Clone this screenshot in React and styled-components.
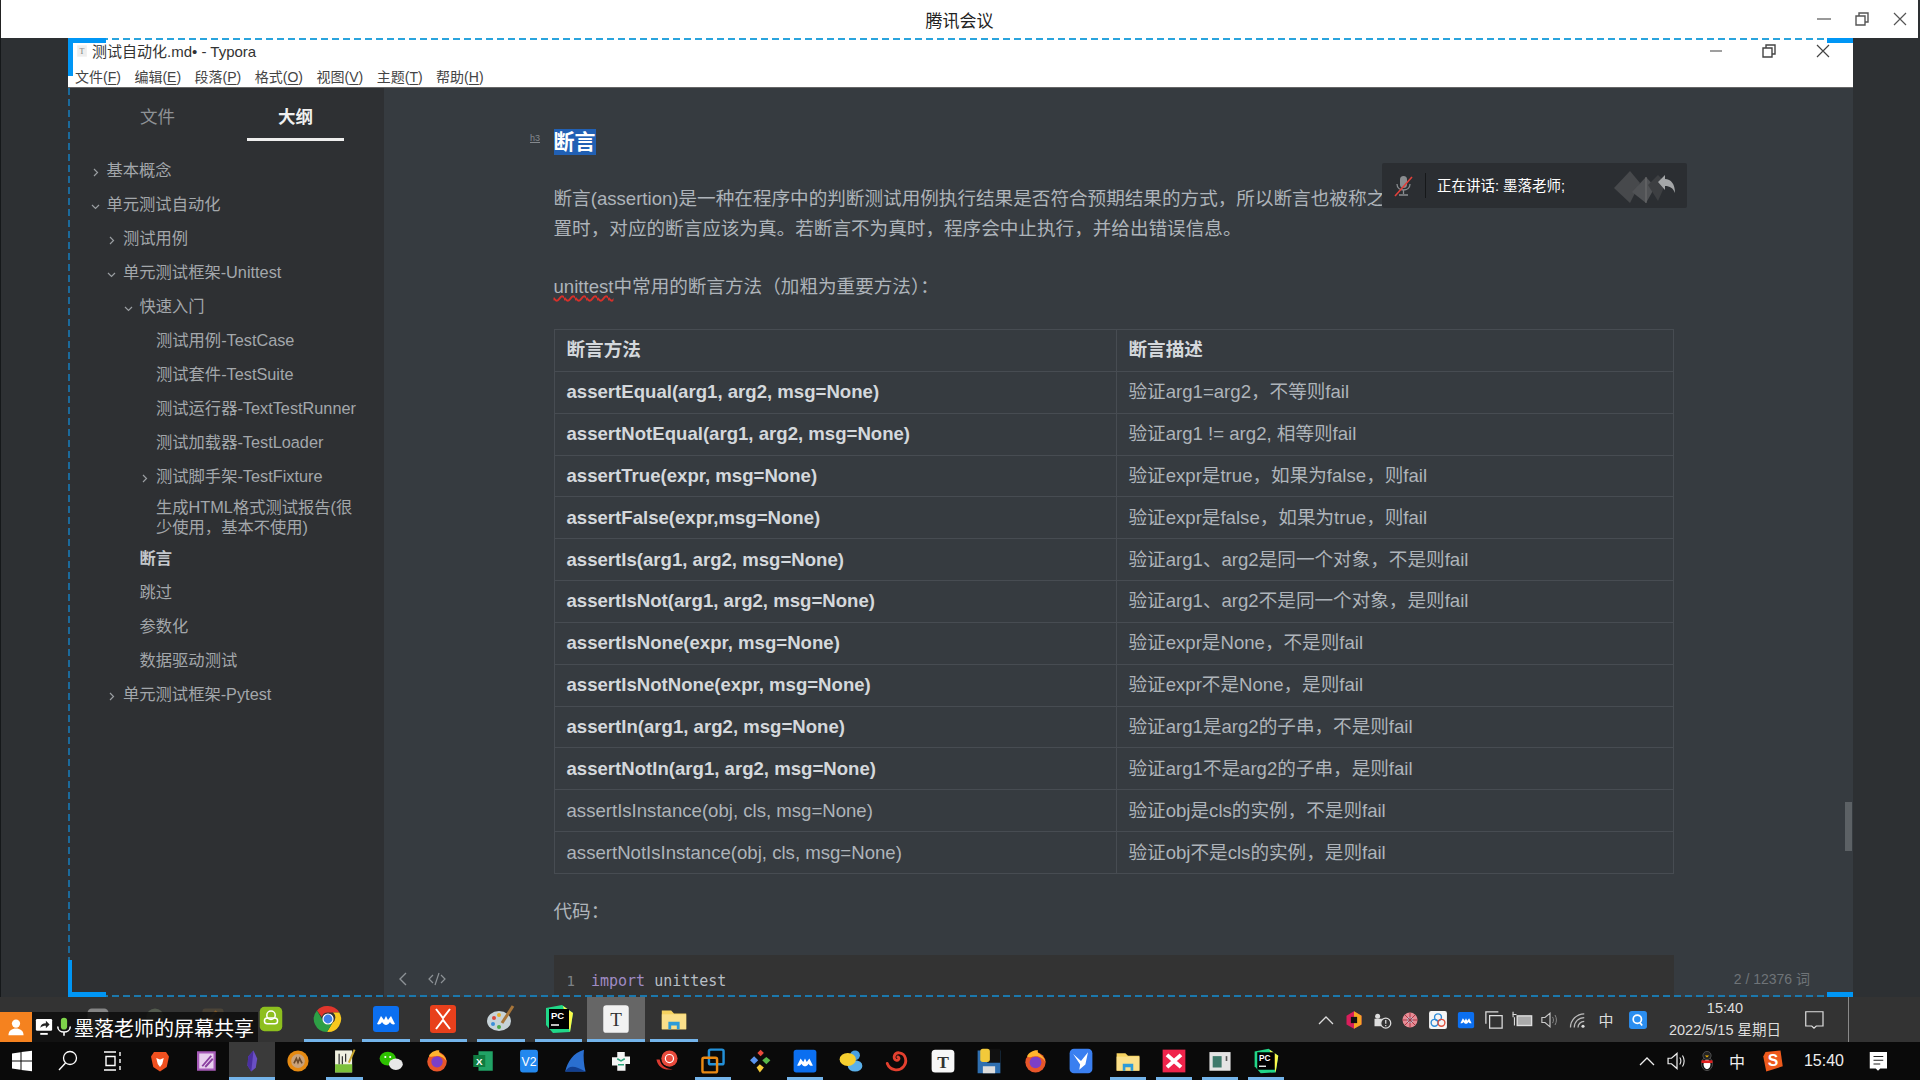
import React from 'react';
import styled, { createGlobalStyle } from 'styled-components';

const GlobalStyle = createGlobalStyle`
  html, body { margin: 0; padding: 0; height: 100%; background: #2d3033; overflow: hidden; }
  body { font-family: "Liberation Sans", "Noto Sans CJK SC", sans-serif; }
  * { box-sizing: border-box; }
`;

const Page = styled.div`
  width: 1920px;
  height: 1080px;
  display: flex;
  flex-direction: column;
  overflow: hidden;
  position: relative;
`;

/* meeting title bar */
const TopBar = styled.div`
  height: 38px;
  flex: none;
  background: #fff;
  border-left: 1px solid #222;
  border-right: 2px solid #2d3033;
  display: flex;
  align-items: center;
  justify-content: center;
  font-size: 17px;
  color: #222;
  position: relative;
`;

const WinButtons = styled.div`
  position: absolute;
  right: ${({ $right }) => $right}px;
  top: ${({ $top }) => $top}px;
  display: flex;
  gap: ${({ $gap }) => $gap}px;
  color: ${({ $color }) => $color};
`;

const Middle = styled.div`
  height: 959px;
  flex: none;
  display: flex;
  background: #2d3033;
  border-left: 1px solid #15181a;
`;

const Gutter = styled.div`
  flex: none;
  width: ${({ $w }) => $w}px;
`;

const Typora = styled.div`
  width: 1785px;
  flex: none;
  position: relative;
  display: flex;
  flex-direction: column;
  overflow: hidden;
`;

const DashTop = styled.div`
  height: 2px;
  flex: none;
  background: repeating-linear-gradient(90deg, #2aa4dd 0 7px, transparent 7px 11px), #fff;
`;

const DashBottom = styled.div`
  position: absolute;
  left: 0;
  right: 0;
  bottom: 0;
  height: 2px;
  background: repeating-linear-gradient(90deg, #1b78ad 0 7px, transparent 7px 11px);
`;

const DashLeft = styled.div`
  position: absolute;
  left: 0;
  top: 50px;
  bottom: 0;
  width: 2px;
  background: repeating-linear-gradient(180deg, #1b6a9b 0 7px, transparent 7px 11px);
`;

const Corner = styled.div`
  position: absolute;
  background: #0096f5;
  width: ${({ $w }) => $w}px;
  height: ${({ $h }) => $h}px;
  ${({ $left }) => $left !== undefined && `left: ${$left}px;`}
  ${({ $right }) => $right !== undefined && `right: ${$right}px;`}
  ${({ $top }) => $top !== undefined && `top: ${$top}px;`}
  ${({ $bottom }) => $bottom !== undefined && `bottom: ${$bottom}px;`}
`;

const Head = styled.div`
  height: 48px;
  flex: none;
  background: #fff;
  border-bottom: 1px solid #666;
  color: #333;
  position: relative;
`;

const TitleRow = styled.div`
  height: 21px;
  display: flex;
  align-items: center;
  padding-left: 7px;
  font-size: 15px;
  gap: 3px;
`;

const MenuRow = styled.div`
  height: 24px;
  margin-top: 3px;
  display: flex;
  align-items: center;
  padding-left: 7px;
  gap: 13.5px;
  font-size: 14px;
  color: #444;
  u { text-underline-offset: 2px; }
`;

const Body = styled.div`
  flex: 1;
  display: flex;
  min-height: 0;
`;

const Sidebar = styled.div`
  width: 316px;
  flex: none;
  background: #2e3033;
`;

const Tabs = styled.div`
  height: 53px;
  display: flex;
  padding-left: 41px;
  gap: 41px;
`;

const Tab = styled.div`
  width: 97px;
  height: 53px;
  display: flex;
  align-items: flex-start;
  justify-content: center;
  padding-top: 18px;
  font-size: 17.5px;
  line-height: 22px;
  color: ${({ $on }) => ($on ? '#f0f0f0' : '#8e9296')};
  font-weight: ${({ $on }) => ($on ? 700 : 400)};
  border-bottom: 3px solid ${({ $on }) => ($on ? '#eeeeee' : 'transparent')};
`;

const Outline = styled.div`
  margin-top: 12px;
`;

const OutlineItem = styled.div`
  min-height: 34px;
  display: flex;
  align-items: center;
  padding: 4px 26px 4px ${({ $level }) => 20.5 + $level * 16.5}px;
  font-size: 16.3px;
  line-height: 20px;
  color: ${({ $on }) => ($on ? '#c4c8cc' : '#a3a7ab')};
  font-weight: ${({ $on }) => ($on ? 700 : 400)};
`;

const Arrow = styled.span`
  width: 18px;
  flex: none;
  display: flex;
  padding: 5px 0 0 2px;
  color: #9a9ea2;
`;

const Main = styled.div`
  flex: 1;
  background: #363b40;
  position: relative;
  overflow: hidden;
  padding: 41px 0 0 169.5px;
  color: #aeb4ba;
  font-size: 18.6px;
  line-height: 30px;
`;

const Article = styled.div`
  width: 1120px;
`;

const HeadingRow = styled.div`
  height: 26px;
  line-height: 26px;
`;

const HeadingMark = styled.span`
  position: absolute;
  left: 146px;
  top: 44px;
  font-size: 9px;
  line-height: 12px;
  color: #85898e;
  text-decoration: underline;
`;

const Heading = styled.span`
  display: inline-block;
  font-size: 21px;
  font-weight: 700;
  color: #fff;
  background: #2160b4;
`;

const Para = styled.p`
  margin: ${({ $gap }) => $gap}px 0 0;
`;

const Wavy = styled.span`
  text-decoration: underline wavy #d8302a 1.5px;
  text-underline-offset: 2px;
`;

const Table = styled.table`
  margin-top: 27px;
  width: 1120px;
  table-layout: fixed;
  border-collapse: collapse;
  td, th {
    height: 41.85px;
    padding: 0 0 0 12px;
    border: 1px solid #474c52;
    text-align: left;
    font-size: 18.6px;
    line-height: 22px;
  }
  th { color: #d4d8dc; font-weight: 700; }
`;

const MethodCell = styled.td`
  color: ${({ $bold }) => ($bold ? '#d4d8dc' : '#aeb4ba')};
  font-weight: ${({ $bold }) => ($bold ? 700 : 400)};
`;

const CodeLabel = styled.p`
  margin: 23px 0 0;
`;

const CodeBlock = styled.div`
  margin-top: 28px;
  height: 60px;
  background: #333333;
  padding: 11px 0 0 13px;
  display: flex;
  gap: 16px;
  font-family: "DejaVu Sans Mono", monospace;
  font-size: 15px;
  line-height: 30px;
  color: #b8bfc6;
`;

const LineNo = styled.span`
  color: #7d8287;
  font-size: 14px;
`;

const Keyword = styled.span`
  color: #a08bc4;
`;

const FooterBar = styled.div`
  position: absolute;
  left: 14px;
  right: 43px;
  bottom: 8px;
  height: 20px;
  display: flex;
  align-items: center;
  gap: 20px;
  color: #8d9296;
`;

const WordCount = styled.span`
  margin-left: auto;
  font-size: 14px;
  color: #6f7478;
`;

const Scrollbar = styled.div`
  position: absolute;
  right: 1px;
  top: 714px;
  width: 7px;
  height: 49px;
  background: #5c6165;
`;

const Toast = styled.div`
  position: absolute;
  left: 998px;
  top: 75px;
  width: 305px;
  height: 45px;
  background: #2b2e32;
  border-radius: 2px;
  display: flex;
  align-items: center;
  padding-left: 10px;
  color: #fff;
  font-size: 14.5px;
`;

const ToastSep = styled.div`
  width: 1px;
  height: 25px;
  background: #16181a;
  margin: 0 11px 0 11px;
`;

const ToastMark = styled.div`
  margin-left: auto;
  margin-right: 11px;
  padding-top: 2px;
  display: flex;
`;

/* tencent meeting's shared windows taskbar */
const ShareBar = styled.div`
  height: 45px;
  flex: none;
  background: #333333;
  display: flex;
  padding-left: 69px;
  position: relative;
`;

const BarCell = styled.div`
  width: 57.6px;
  height: 45px;
  flex: none;
  display: flex;
  align-items: center;
  justify-content: center;
  padding-bottom: 2px;
  background: ${({ $active }) => ($active ? '#666' : 'transparent')};
  position: relative;
  &::after {
    content: "";
    display: ${({ $on }) => ($on ? 'block' : 'none')};
    position: absolute;
    left: ${({ $active }) => ($active ? 0 : 5)}px;
    right: ${({ $active }) => ($active ? 0 : 5)}px;
    bottom: 0;
    height: 3px;
    background: #74b4ea;
  }
  & > svg { opacity: ${({ $dim }) => ($dim ? 0.45 : 1)}; }
`;

const ShareTray = styled.div`
  margin-left: auto;
  margin-right: 71px;
  display: flex;
  align-items: center;
  color: #dcdcdc;
  border-right: 1px solid #8a8a8a;
`;

const ShareTrayCell = styled.div`
  width: ${({ $w }) => $w || 28}px;
  height: 45px;
  flex: none;
  display: flex;
  align-items: center;
  justify-content: center;
  padding-right: ${({ $pr }) => $pr || 0}px;
  font-size: 15px;
`;

const Clock = styled.div`
  width: 130px;
  flex: none;
  margin-left: 4px;
  padding-bottom: 2px;
  display: flex;
  flex-direction: column;
  align-items: center;
  font-size: 14.5px;
  line-height: 22px;
  color: #dedede;
`;

const ShareBadge = styled.div`
  position: absolute;
  left: 0;
  bottom: 0;
  width: 258px;
  height: 30px;
  background: rgba(14, 14, 14, 0.88);
  display: flex;
  align-items: center;
  color: #fff;
  font-size: 20px;
`;

const BadgeUser = styled.div`
  width: 32px;
  height: 30px;
  flex: none;
  background: #f5821f;
  display: flex;
  align-items: center;
  justify-content: center;
  margin-right: 2px;
`;

const Taskbar = styled.div`
  height: 38px;
  flex: none;
  background: #0a0a0a;
  display: flex;
`;

const TaskCell = styled.div`
  width: 46.07px;
  height: 38px;
  flex: none;
  display: flex;
  align-items: center;
  justify-content: center;
  background: ${({ $active }) => ($active ? '#3a3a3a' : 'transparent')};
  position: relative;
  &:first-child { margin-left: -1px; }
  &::after {
    content: "";
    display: ${({ $on }) => ($on ? 'block' : 'none')};
    position: absolute;
    left: ${({ $active }) => ($active ? 0 : 5)}px;
    right: ${({ $active }) => ($active ? 0 : 5)}px;
    bottom: 0;
    height: 3px;
    background: #74b4ea;
  }
`;

const SysTray = styled.div`
  margin-left: auto;
  display: flex;
  align-items: center;
  padding-right: 18px;
  color: #eee;
`;

const SysCell = styled.div`
  width: ${({ $w }) => $w}px;
  height: 38px;
  flex: none;
  display: flex;
  align-items: center;
  justify-content: center;
  font-size: 16px;
`;

const Ico = ({ s = 28, children, v = '0 0 32 32' }) => (
  <svg width={s} height={s} viewBox={v} fill="none">{children}</svg>
);

const Chev = ({ open }) => (
  <svg width="9" height="9" viewBox="0 0 9 9" fill="none" stroke="currentColor" strokeWidth="1.2">
    <path d={open ? 'M1 3l3.5 3.5L8 3' : 'M3 1l3.5 3.5L3 8'} />
  </svg>
);

const Minimize = ({ w }) => <svg width={w} height="14" viewBox="0 0 14 14" stroke="currentColor" strokeWidth="1.2"><path d="M0 7h14" /></svg>;
const Restore = () => (
  <svg width="14" height="14" viewBox="0 0 14 14" fill="none" stroke="currentColor" strokeWidth="1.4">
    <path d="M1 4h9v9H1zM4 4V1h9v9h-3" />
  </svg>
);
const Close = () => <svg width="14" height="14" viewBox="0 0 14 14" stroke="currentColor" strokeWidth="1.2"><path d="M1 1l12 12M13 1L1 13" /></svg>;

const TyporaIcon = ({ s = 28 }) => (
  <Ico s={s}>
    <rect x="3" y="3" width="26" height="26" rx="4" fill="#f7f7f7" />
    <text x="16" y="24" textAnchor="middle" fontSize="20" fontWeight="700" fontFamily="Liberation Serif, serif" fill="#333">T</text>
  </Ico>
);

const Mountain = ({ s = 28 }) => (
  <Ico s={s}>
    <rect x="3" y="3" width="26" height="26" rx="3" fill="#0b6ff0" />
    <path d="M7 21l4-8 3 4 2-4 2 4 3-4 4 8c-2 1-4 0-5-2-1 2-3 3-4 3s-3-1-4-3c-1 2-3 3-5 2z" fill="#fff" />
  </Ico>
);

const Folder = ({ s = 28 }) => (
  <Ico s={s}>
    <path d="M3 7h10l3 3h13v17H3z" fill="#f6d25f" />
    <path d="M3 11h26v16H3z" fill="#fbe08a" />
    <path d="M10 27v-8h12v8h-3v-4h-6v4z" fill="#2d9bd8" />
  </Ico>
);

const PyCharm = ({ s = 28 }) => (
  <Ico s={s}>
    <path d="M3 5l16-3 11 8-3 19-17 1-7-8z" fill="#21d789" />
    <path d="M20 3l10 7-3 19z" fill="#fcf84a" />
    <rect x="6" y="6" width="20" height="20" fill="#000" />
    <text x="8" y="16" fontSize="9.5" fontWeight="700" fontFamily="Liberation Sans, sans-serif" fill="#fff">PC</text>
    <path d="M8 22h8" stroke="#fff" strokeWidth="1.5" />
  </Ico>
);

const Firefox = ({ s = 26 }) => (
  <Ico s={s}>
    <circle cx="16" cy="17" r="12" fill="#e8562a" />
    <circle cx="16" cy="17" r="7" fill="#7b3fc8" />
    <path d="M6 10c2-5 9-8 13-7-1 2 0 3 3 5 3 2 5 5 6 9-3-5-7-8-14-7-3 0-6 2-8 0z" fill="#ffb52e" />
  </Ico>
);

const Bubbles = () => (
  <Ico s={26}>
    <circle cx="21" cy="9" r="6" fill="#4a9fe0" />
    <ellipse cx="21" cy="22" rx="9" ry="7" fill="#5bb0ea" />
    <ellipse cx="12" cy="14" rx="10" ry="8" fill="#f6cf2f" />
  </Ico>
);

const barIcons = [
  <Ico key="a"><rect x="4" y="4" width="24" height="24" rx="5" fill="#e8e8e8" /></Ico>,
  <Ico key="b"><circle cx="16" cy="14" r="10" fill="#7a8a70" /><rect x="8" y="18" width="16" height="10" fill="#444" /></Ico>,
  <Ico key="c"><rect x="4" y="4" width="24" height="24" rx="3" fill="#6a5a40" /><path d="M20 7l-8 9h8l-8 9" stroke="#e08a20" strokeWidth="3" /></Ico>,
  <Ico key="d" s={30}>
    <rect x="4" y="3" width="24" height="26" rx="5" fill="#8dbf1e" />
    <circle cx="16" cy="12" r="4.5" stroke="#fff" strokeWidth="1.6" />
    <rect x="9" y="15" width="14" height="6" rx="3" stroke="#fff" strokeWidth="1.6" />
  </Ico>,
  <Ico key="e" s={32}>
    <path d="M16 3a13 13 0 0 1 11.3 6.5H16a6.5 6.5 0 0 0-6.2 4.4L5 7.5A13 13 0 0 1 16 3z" fill="#e0362c" />
    <path d="M27.3 9.5A13 13 0 0 1 15 29l5.6-9.2A6.5 6.5 0 0 0 21 9.5z" fill="#f8c81e" />
    <path d="M5 7.5l5.7 9.8a6.5 6.5 0 0 0 9.6 2.7L15 29A13 13 0 0 1 5 7.5z" fill="#2d9f45" />
    <circle cx="16" cy="16" r="5" fill="#3f7fe8" stroke="#fff" strokeWidth="1.2" />
  </Ico>,
  <Mountain key="f" s={32} />,
  <Ico key="g" s={32}>
    <rect x="3" y="2" width="26" height="28" rx="3" fill="#e8401c" />
    <path d="M9 6l7 9 7-9M9 26l7-9 7 9" stroke="#fff" strokeWidth="2" />
  </Ico>,
  <Ico key="h" s={32}>
    <ellipse cx="14" cy="18" rx="12" ry="10" fill="#c7d3d8" />
    <circle cx="9" cy="15" r="2" fill="#d9483b" /><circle cx="14" cy="12" r="2" fill="#e6b02e" />
    <circle cx="8" cy="21" r="2" fill="#3a8fd8" /><circle cx="14" cy="24" r="2" fill="#4aa84a" />
    <path d="M17 20L28 3" stroke="#a8763a" strokeWidth="3" />
  </Ico>,
  <PyCharm key="i" s={32} />,
  <Ico key="j" s={34}>
    <rect x="4" y="3" width="24" height="26" rx="3" fill="#f2f2f2" />
    <text x="16" y="23" textAnchor="middle" fontSize="18" fontFamily="Liberation Serif, serif" fill="#333">T</text>
  </Ico>,
  <Folder key="k" s={30} />,
];

const taskIcons = [
  <Ico key="win" s={22} v="0 0 22 22"><path d="M1 3.5l8.5-1.2v8.2H1zM10.5 2.1L21 .7v9.8H10.5zM1 11.5h8.5v8.2L1 18.5zM10.5 11.5H21v9.8l-10.5-1.4z" fill="#fff" /></Ico>,
  <Ico key="search" s={22} v="0 0 22 22"><circle cx="13" cy="8" r="6.5" stroke="#fff" strokeWidth="1.3" /><path d="M8.5 13L2 20" stroke="#fff" strokeWidth="1.4" /></Ico>,
  <Ico key="view" s={22} v="0 0 22 22"><path d="M1 2h12M1 20h12M3 6.5h9v9H3zM17 2v4M17 9v4M17 16v4" stroke="#fff" strokeWidth="1.4" /></Ico>,
  <Ico key="brave" s={24}><path d="M8 4h16l4 6-3 14-9 6-9-6-3-14z" fill="#f0501f" /><path d="M11 12l5 2 5-2-2 8-3 4-3-4z" fill="#fff" /></Ico>,
  <Ico key="note" s={24}><rect x="4" y="3" width="25" height="26" fill="#a65bb8" /><rect x="7" y="6" width="19" height="20" fill="#e8d0ee" /><path d="M11 23L23 9M15 24L25 13" stroke="#8a3fa0" strokeWidth="2.5" /></Ico>,
  <Ico key="obs" s={24}><path d="M18 2l5 11-2 12-6 5-5-8 1-12z" fill="#6a4fc4" /><path d="M18 2l-7 8-1 12 5 8z" fill="#4a2fa0" /></Ico>,
  <Ico key="audio" s={26}><circle cx="16" cy="16" r="13" fill="#e58a12" /><circle cx="16" cy="16" r="8.5" fill="#c9a27a" /><path d="M11 19l3-6 2 5 2-5 3 6" stroke="#6b4a2a" strokeWidth="2" /></Ico>,
  <Ico key="pad" s={26}><rect x="5" y="3" width="21" height="27" fill="#f0f0e0" /><rect x="5" y="20" width="21" height="10" fill="#7cc13a" /><path d="M10 7v13M14 10v10M18 7v10" stroke="#333" strokeWidth="1.5" /><path d="M29 2l-7 16" stroke="#c9a62e" strokeWidth="2.5" /></Ico>,
  <Ico key="wechat" s={26}><ellipse cx="12" cy="13" rx="10" ry="8.5" fill="#2dc100" /><ellipse cx="22" cy="20" rx="8.5" ry="7" fill="#e8e8e8" /><circle cx="9" cy="11" r="1.3" fill="#fff" /><circle cx="15" cy="11" r="1.3" fill="#fff" /></Ico>,
  <Firefox key="ff" />,
  <Ico key="xl" s={24}><rect x="10" y="3" width="19" height="26" fill="#21a366" /><rect x="3" y="8" width="16" height="16" fill="#107c41" /><text x="11" y="21" textAnchor="middle" fontSize="13" fontWeight="700" fontFamily="Liberation Sans, sans-serif" fill="#fff">X</text></Ico>,
  <Ico key="v2" s={26}><rect x="5" y="2" width="22" height="28" rx="3" fill="#2388ee" /><text x="16" y="22" textAnchor="middle" fontSize="15" fontFamily="Liberation Sans, sans-serif" fill="#fff">V2</text></Ico>,
  <Ico key="fin" s={26}><path d="M4 29C7 16 14 6 27 2c-1 9 0 19 2 27z" fill="#2a6fd0" /><path d="M4 29C8 22 14 20 29 29z" fill="#123f90" /></Ico>,
  <Ico key="puzzle" s={24}><path d="M11 4h10v6h7v10h-6v9H11v-7H4V11h7z" fill="#f4f4f4" /><path d="M11 13l5 3 5-3M12 21h8" stroke="#2aa57a" strokeWidth="2" /></Ico>,
  <Ico key="snail" s={26}><circle cx="19" cy="13" r="10" fill="#e84a3c" /><circle cx="19" cy="13" r="5" stroke="#fff" strokeWidth="1.5" /><path d="M3 14c2 10 10 14 20 12-8-1-14-3-16-12z" fill="#d93a30" /></Ico>,
  <Ico key="box" s={26}><rect x="11" y="2" width="18" height="18" rx="2" stroke="#2390d8" strokeWidth="3" /><rect x="3" y="12" width="18" height="18" rx="2" stroke="#ea8a14" strokeWidth="3" /></Ico>,
  <Ico key="git" s={26}><path d="M5 15l5-5 5 5-5 5z" fill="#5a94ee" /><path d="M14 6l4-4 4 4-4 4z" fill="#e84a3c" /><path d="M20 15l5-4 5 4-5 5z" fill="#59b84a" /><path d="M13 24l4-4 5 4-5 6z" fill="#f3c93a" /></Ico>,
  <Mountain key="m" />,
  <Bubbles key="bub" />,
  <Ico key="spiral" s={26}><path d="M4 19c3 8 14 11 20 4 5-6 3-16-5-17-6-1-9 7-4 9 3 1 5-3 2-4" stroke="#e4402f" strokeWidth="3.5" strokeLinecap="round" /></Ico>,
  <TyporaIcon key="t" />,
  <Ico key="py" s={28}><rect x="3" y="4" width="26" height="26" fill="#2f6fb0" /><rect x="14" y="2" width="15" height="16" fill="#111" /><rect x="6" y="2" width="11" height="15" rx="3" fill="#f3c93a" /><rect x="9" y="22" width="14" height="8" fill="#ddd" /></Ico>,
  <Firefox key="ff2" s={27} />,
  <Ico key="bird" s={28}><rect x="3" y="2" width="26" height="28" rx="5" fill="#3a7ff0" /><path d="M7 8l9 8 8-10-3 14-7 6 1-6z" fill="#fff" /></Ico>,
  <Folder key="fo" />,
  <Ico key="x" s={28}><rect x="3" y="3" width="26" height="26" fill="#f0244c" /><path d="M8 9l16 14M24 9L8 23" stroke="#fff" strokeWidth="4.5" /></Ico>,
  <Ico key="win2" s={26}><rect x="3" y="5" width="26" height="23" fill="#e4e4e4" /><rect x="7" y="10" width="11" height="14" fill="#3f7a6c" /><path d="M24 10v6" stroke="#555" strokeWidth="2" /></Ico>,
  <PyCharm key="pc" />,
];

const taskOn = new Set([5, 7, 15, 17, 24, 25, 26, 27]);

const outline = [
  { t: '基本概念', l: 0, a: 'r' },
  { t: '单元测试自动化', l: 0, a: 'd' },
  { t: '测试用例', l: 1, a: 'r' },
  { t: '单元测试框架-Unittest', l: 1, a: 'd' },
  { t: '快速入门', l: 2, a: 'd' },
  { t: '测试用例-TestCase', l: 3 },
  { t: '测试套件-TestSuite', l: 3 },
  { t: '测试运行器-TextTestRunner', l: 3 },
  { t: '测试加载器-TestLoader', l: 3 },
  { t: '测试脚手架-TestFixture', l: 3, a: 'r' },
  { t: '生成HTML格式测试报告(很少使用，基本不使用)', l: 3 },
  { t: '断言', l: 2, on: true },
  { t: '跳过', l: 2 },
  { t: '参数化', l: 2 },
  { t: '数据驱动测试', l: 2 },
  { t: '单元测试框架-Pytest', l: 1, a: 'r' },
];

const rows = [
  ['assertEqual(arg1, arg2, msg=None)', '验证arg1=arg2，不等则fail', true],
  ['assertNotEqual(arg1, arg2, msg=None)', '验证arg1 != arg2, 相等则fail', true],
  ['assertTrue(expr, msg=None)', '验证expr是true，如果为false，则fail', true],
  ['assertFalse(expr,msg=None)', '验证expr是false，如果为true，则fail', true],
  ['assertIs(arg1, arg2, msg=None)', '验证arg1、arg2是同一个对象，不是则fail', true],
  ['assertIsNot(arg1, arg2, msg=None)', '验证arg1、arg2不是同一个对象，是则fail', true],
  ['assertIsNone(expr, msg=None)', '验证expr是None，不是则fail', true],
  ['assertIsNotNone(expr, msg=None)', '验证expr不是None，是则fail', true],
  ['assertIn(arg1, arg2, msg=None)', '验证arg1是arg2的子串，不是则fail', true],
  ['assertNotIn(arg1, arg2, msg=None)', '验证arg1不是arg2的子串，是则fail', true],
  ['assertIsInstance(obj, cls, msg=None)', '验证obj是cls的实例，不是则fail', false],
  ['assertNotIsInstance(obj, cls, msg=None)', '验证obj不是cls的实例，是则fail', false],
];

const menus = [['文件', 'F'], ['编辑', 'E'], ['段落', 'P'], ['格式', 'O'], ['视图', 'V'], ['主题', 'T'], ['帮助', 'H']];

const App = () => (
  <Page>
    <GlobalStyle />
    <TopBar>
      腾讯会议
      <WinButtons $right={11} $top={12} $gap={24} $color="#555">
        <Minimize w={14} /><Restore /><Close />
      </WinButtons>
    </TopBar>
    <Middle>
      <Gutter $w={67} />
      <Typora>
        <DashTop />
        <Head>
          <TitleRow>
            <Ico s={14}><rect x="5" y="3" width="22" height="26" fill="#eee" /><text x="16" y="23" textAnchor="middle" fontSize="18" fontFamily="Liberation Serif, serif" fill="#777">T</text></Ico>
            测试自动化.md• - Typora
          </TitleRow>
          <MenuRow>
            {menus.map(([n, k]) => <span key={k}>{n}(<u>{k}</u>)</span>)}
          </MenuRow>
          <WinButtons $right={23} $top={4} $gap={40} $color="#444">
            <Minimize w={12} /><Restore /><Close />
          </WinButtons>
        </Head>
        <Body>
          <Sidebar>
            <Tabs>
              <Tab>文件</Tab>
              <Tab $on>大纲</Tab>
            </Tabs>
            <Outline>
              {outline.map((o) => (
                <OutlineItem key={o.t} $level={o.l} $on={o.on}>
                  <Arrow>{o.a && <Chev open={o.a === 'd'} />}</Arrow>
                  <span>{o.t}</span>
                </OutlineItem>
              ))}
            </Outline>
          </Sidebar>
          <Main>
            <HeadingMark>h3</HeadingMark>
            <Article>
              <HeadingRow><Heading>断言</Heading></HeadingRow>
              <Para $gap={29}>断言(assertion)是一种在程序中的判断测试用例执行结果是否符合预期结果的方式，所以断言也被称之<br />置时，对应的断言应该为真。若断言不为真时，程序会中止执行，并给出错误信息。</Para>
              <Para $gap={28}><Wavy>unittest</Wavy>中常用的断言方法（加粗为重要方法）：</Para>
              <Table>
                <colgroup><col style={{ width: 562 }} /><col /></colgroup>
                <thead>
                  <tr><th>断言方法</th><th>断言描述</th></tr>
                </thead>
                <tbody>
                  {rows.map(([m, d, b]) => (
                    <tr key={m}><MethodCell $bold={b}>{m}</MethodCell><td>{d}</td></tr>
                  ))}
                </tbody>
              </Table>
              <CodeLabel>代码：</CodeLabel>
              <CodeBlock>
                <LineNo>1</LineNo>
                <span><Keyword>import</Keyword> unittest</span>
              </CodeBlock>
            </Article>
            <FooterBar>
              <svg width="10" height="14" viewBox="0 0 10 14" fill="none" stroke="currentColor" strokeWidth="1.4"><path d="M8 1L2 7l6 6" /></svg>
              <svg width="18" height="14" viewBox="0 0 18 14" fill="none" stroke="currentColor" strokeWidth="1.2"><path d="M5 3L1 7l4 4M13 3l4 4-4 4M11 1L7 13" /></svg>
              <WordCount>2 / 12376 词</WordCount>
            </FooterBar>
            <Scrollbar />
            <Toast>
              <svg width="22" height="24" viewBox="0 0 22 24" fill="none">
                <rect x="8" y="2" width="7" height="12" rx="3.5" fill="#8a8d90" />
                <path d="M5 10c0 8 13 8 13 0M11.5 16v4M7 21h9" stroke="#8a8d90" strokeWidth="1.3" />
                <path d="M3 22L20 3" stroke="#e0403a" strokeWidth="1.6" />
              </svg>
              <ToastSep />
              正在讲话: 墨落老师;
              <ToastMark>
                <svg width="62" height="32" viewBox="0 0 62 32" fill="none">
                  <path d="M0 17L16 0l10 12-10 20z" fill="#47494c" />
                  <path d="M18 21L32 6l9 10-9 16z" fill="#505255" />
                  <path d="M32 6v26" stroke="#777" strokeWidth="0.8" />
                  <path d="M34 14L44 4l8 8-8 18z" fill="#3d3f42" />
                  <path d="M44 11l7-7v4c6 0 10 5 10 14-2-5-5-7-10-7v4z" fill="#a4a6a8" />
                </svg>
              </ToastMark>
            </Toast>
          </Main>
        </Body>
        <DashBottom />
        <DashLeft />
        <Corner $left={0} $top={0} $w={38} $h={5} />
        <Corner $left={0} $top={0} $w={5} $h={38} />
        <Corner $right={0} $top={0} $w={26} $h={5} />
        <Corner $left={0} $bottom={0} $w={38} $h={5} />
        <Corner $left={0} $bottom={0} $w={4} $h={37} />
        <Corner $right={0} $bottom={0} $w={26} $h={5} />
      </Typora>
      <Gutter $w={67} />
    </Middle>
    <ShareBar>
      {barIcons.map((icon, i) => (
        <BarCell key={i} $dim={i < 3} $on={i > 3} $active={i === 9}>{icon}</BarCell>
      ))}
      <ShareTray>
        <ShareTrayCell><svg width="16" height="10" viewBox="0 0 16 10" fill="none" stroke="currentColor" strokeWidth="1.3"><path d="M1 9l7-7 7 7" /></svg></ShareTrayCell>
        <ShareTrayCell><Ico s={20}><path d="M16 2l12 7v14l-12 7-12-7V9z" fill="#d81e5b" /><path d="M16 2l12 7v14l-12 7z" fill="#f5a623" /><rect x="11" y="11" width="10" height="10" fill="#111" /></Ico></ShareTrayCell>
        <ShareTrayCell><Ico s={20}><path d="M4 14h14v12H4z" fill="#ddd" /><circle cx="9" cy="10" r="4" fill="#ddd" /><circle cx="22" cy="21" r="8" fill="#333" stroke="#ddd" strokeWidth="2" /><path d="M22 16v6M22 24v2" stroke="#ddd" strokeWidth="2" /></Ico></ShareTrayCell>
        <ShareTrayCell><Ico s={20}><circle cx="16" cy="16" r="12" fill="#e88b94" /><circle cx="16" cy="16" r="5" fill="#b8c8d8" /><path d="M16 4v24M4 16h24M8 8l16 16M24 8L8 24" stroke="#a83240" strokeWidth="1.5" /></Ico></ShareTrayCell>
        <ShareTrayCell><Ico s={22}><rect x="3" y="3" width="26" height="26" rx="3" fill="#f5f5f5" /><circle cx="16" cy="12" r="5" stroke="#2e8bd8" strokeWidth="2" /><circle cx="11" cy="20" r="5" stroke="#2e8bd8" strokeWidth="2" /><circle cx="21" cy="20" r="5" stroke="#e0503c" strokeWidth="2" /></Ico></ShareTrayCell>
        <ShareTrayCell><Mountain s={20} /></ShareTrayCell>
        <ShareTrayCell><Ico s={20}><path d="M3 22V3h20M9 9h20v20H9z" stroke="#ddd" strokeWidth="2" /></Ico></ShareTrayCell>
        <ShareTrayCell><Ico s={22}><rect x="9" y="10" width="21" height="14" stroke="#ddd" strokeWidth="2" fill="#aaa" /><path d="M2 8h6M3 4v8M5 12v12" stroke="#ddd" strokeWidth="1.6" /></Ico></ShareTrayCell>
        <ShareTrayCell><Ico s={20}><path d="M3 12h5l8-7v22l-8-7H3z" stroke="#ccc" strokeWidth="1.8" /><path d="M20 11c2 3 2 7 0 10M24 8c3 5 3 11 0 16" stroke="#888" strokeWidth="1.6" /></Ico></ShareTrayCell>
        <ShareTrayCell><Ico s={20}><path d="M4 28c0-12 10-22 22-22M10 28c0-9 7-16 16-16M16 28c0-5 4-10 10-10" stroke="#bbb" strokeWidth="2" /><circle cx="24" cy="26" r="2.5" fill="#ddd" /></Ico></ShareTrayCell>
        <ShareTrayCell>中</ShareTrayCell>
        <ShareTrayCell $w={36}><Ico s={22}><rect x="3" y="3" width="26" height="26" rx="4" fill="#2b8ef0" /><circle cx="15" cy="15" r="6" stroke="#fff" strokeWidth="2.5" /><path d="M19 20l3 4" stroke="#fff" strokeWidth="2.5" /></Ico></ShareTrayCell>
        <Clock><span>15:40</span><span>2022/5/15 星期日</span></Clock>
        <ShareTrayCell $w={58} $pr={10}><Ico s={24}><path d="M5 5h23v19H19l-3 3-3-3H5z" stroke="#e0e0e0" strokeWidth="1.6" /></Ico></ShareTrayCell>
      </ShareTray>
      <ShareBadge>
        <BadgeUser><Ico s={22}><circle cx="16" cy="11" r="6" fill="#fff" /><path d="M5 28c0-7 5-10 11-10s11 3 11 10z" fill="#fff" /></Ico></BadgeUser>
        <Ico s={20}><rect x="3" y="3" width="26" height="19" rx="2" fill="#fff" /><path d="M10 17c1-5 4-7 9-7V6l6 6-6 6v-4c-4 0-6 1-9 3z" fill="#222" /><path d="M10 27h12" stroke="#fff" strokeWidth="3" /></Ico>
        <Ico s={20}><rect x="11" y="1" width="10" height="19" rx="5" fill="#7ed44a" /><path d="M6 15c0 12 20 12 20 0M16 25v5" stroke="#fff" strokeWidth="2.5" /></Ico>
        墨落老师的屏幕共享
      </ShareBadge>
    </ShareBar>
    <Taskbar>
      {taskIcons.map((icon, i) => (
        <TaskCell key={i} $active={i === 5} $on={taskOn.has(i)}>{icon}</TaskCell>
      ))}
      <SysTray>
        <SysCell $w={30}><svg width="16" height="10" viewBox="0 0 16 10" fill="none" stroke="currentColor" strokeWidth="1.3"><path d="M1 9l7-7 7 7" /></svg></SysCell>
        <SysCell $w={30}><Ico s={22}><path d="M3 12h5l8-7v22l-8-7H3z" stroke="#eee" strokeWidth="1.8" /><path d="M20 11c2 3 2 7 0 10M24 8c3 5 3 11 0 16" stroke="#eee" strokeWidth="1.6" /></Ico></SysCell>
        <SysCell $w={30}><Ico s={22}><ellipse cx="16" cy="20" rx="8" ry="10" fill="#111" stroke="#666" /><ellipse cx="16" cy="21" rx="5" ry="7" fill="#fff" /><circle cx="16" cy="8" r="6" fill="#222" stroke="#666" /><path d="M8 15h16v4H8z" fill="#e02020" /><path d="M13 8h6l-3 3z" fill="#f5b400" /></Ico></SysCell>
        <SysCell $w={30}>中</SysCell>
        <SysCell $w={42}><Ico s={24}><path d="M6 4l20-2 3 21-22 7-4-20z" fill="#ee5a1c" /><text x="16" y="23" textAnchor="middle" fontSize="21" fontWeight="700" fontFamily="Liberation Sans, sans-serif" fill="#fff">S</text></Ico></SysCell>
        <SysCell $w={60}>15:40</SysCell>
        <SysCell $w={48}><Ico s={24}><path d="M5 4h23v22H19l-3 3-3-3H5z" fill="#fff" /><path d="M10 10h13M10 15h13M10 20h9" stroke="#222" strokeWidth="1.6" /></Ico></SysCell>
      </SysTray>
    </Taskbar>
  </Page>
);

export default App;
